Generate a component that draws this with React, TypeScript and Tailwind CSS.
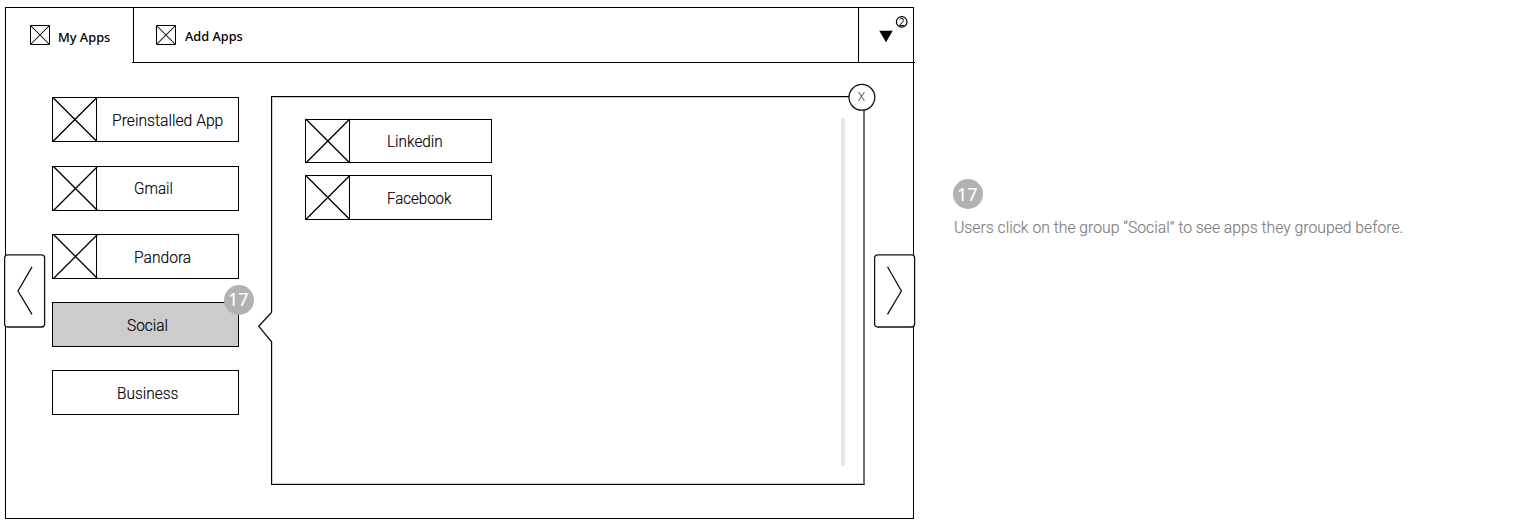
import React from "react";

const labelFont = "font-['Roboto','Liberation_Sans',sans-serif] font-light text-[16px] leading-5 whitespace-nowrap origin-left [-webkit-text-stroke:0.15px_currentColor]";
const tabFont = "font-['Noto_Sans','Open_Sans',sans-serif] font-medium text-[13px] leading-5 whitespace-nowrap origin-left";

function Cross({ className, dx = 0, dy = 0 }: { className: string; dx?: number; dy?: number }) {
  return (
    <svg className={className} viewBox="0 0 45 45" fill="none" stroke="black" strokeWidth="1.35">
      <path d={`M${0.5 + dx} ${0.5 + dy}L${44.5 + dx} ${44.5 + dy}M${44.5 + dx} ${0.5 + dy}L${0.5 + dx} ${44.5 + dy}`} />
    </svg>
  );
}

function SmallCross() {
  return (
    <svg className="block h-5 w-5 shrink-0" viewBox="0 0 20 20" fill="none" stroke="black">
      <path d="M.5 .5h19v19H.5z" />
      <path d="M1 1l18 18M19 1L1 19" strokeWidth="1.05" />
    </svg>
  );
}

function AppCard({ label, labelClass, box = "h-[45px]", dx = 0, dy = 0 }: { label: string; labelClass: string; box?: string; dx?: number; dy?: number }) {
  return (
    <div className={`flex w-[187px] shrink-0 border border-black bg-white ${box}`}>
      <div className="-mt-px -ml-px w-[45px] shrink-0 border-r border-black">
        <Cross className="block h-[45px] w-[45px] overflow-visible" dx={dx} dy={dy} />
      </div>
      <span className={`${labelFont} ${labelClass}`}>{label}</span>
    </div>
  );
}

function Badge({ className, textClass }: { className: string; textClass: string }) {
  return (
    <span className={`block h-[30px] w-[30px] rounded-full bg-[#b2b2b2] text-white font-['Noto_Sans',sans-serif] text-[18px] leading-[30px] ${className}`}>
      <span className={`block whitespace-nowrap [-webkit-text-stroke:0.15px_currentColor] ${textClass}`}>17</span>
    </span>
  );
}

function NavButton({ className, points }: { className: string; points: string }) {
  return (
    <button className={`absolute top-[254px] h-[74px] w-[42px] ${className}`}>
      <svg className="block h-[74px] w-[42px]" viewBox="0 0 42 74" fill="none" stroke="#111" strokeWidth="1.3">
        <rect x="0.6" y="0.8" width="40" height="72.2" rx="3" fill="white" />
        <polyline points={points} />
      </svg>
    </button>
  );
}

export default function App() {
  return (
    <div className="relative flex h-[524px] w-[1523px] overflow-hidden bg-white pt-[7px] pl-[5px] text-black">
      <main className="flex h-[512px] w-[909px] shrink-0 flex-col border border-black">
        <header className="flex h-[55px] shrink-0">
          <div className="flex w-[127px] shrink-0 pt-[17px] pl-6">
            <SmallCross />
            <span className={`${tabFont} mt-[2px] ml-2 scale-x-[0.985]`}>My Apps</span>
          </div>
          <div className="-ml-px w-px shrink-0 self-end border-b border-black" />
          <div className="flex w-[725px] shrink-0 border-b border-l border-black pt-[17px] pl-[22px]">
            <SmallCross />
            <span className={`${tabFont} mt-px ml-[9px] scale-x-[0.98]`}>Add Apps</span>
          </div>
          <div className="flex w-[57px] shrink-0 border-b border-l border-black">
            <svg className="block h-[54px] w-[54px]" viewBox="0 0 54 54">
              <path d="M20.3 22.8h13.4L27 34.2z" />
              <circle cx="42.7" cy="13.9" r="5.3" fill="none" stroke="black" strokeWidth="1.2" />
              <text x="42.7" y="17.6" textAnchor="middle" className="font-['Noto_Sans',sans-serif] text-[10px]">2</text>
            </svg>
          </div>
        </header>

        <div className="flex pl-[46px]">
          <nav className="flex w-[187px] shrink-0 flex-col pt-[34px]">
            <AppCard label="Preinstalled App" labelClass="mt-[13px] ml-[15px] scale-x-[0.98]" dx={0.4} />
            <div className="h-6" />
            <AppCard label="Gmail" labelClass="mt-3 ml-[37px] scale-x-[0.95]" dx={1} />
            <div className="h-[23px]" />
            <AppCard label="Pandora" labelClass="mt-[13px] ml-[37px] scale-x-[0.975]" dx={1} />
            <div className="relative mt-[23px] flex h-[45px] border border-black bg-[#ccc]">
              <span className={`${labelFont} mt-[13px] ml-[73.5px] scale-x-[0.965]`}>Social</span>
              <Badge className="absolute -top-[18px] left-[171px]" textClass="-mt-px pl-[4px]" />
            </div>
            <div className="mt-[23px] flex h-[45px] border border-black">
              <span className={`${labelFont} mt-[13px] ml-[63.5px] scale-x-[0.965]`}>Business</span>
            </div>
          </nav>

          <section className="relative mt-[33px] ml-8 flex h-[389px] w-[594px] shrink-0 justify-between border border-r-2 border-black border-r-[#6f6f6f] pt-[21px] pr-[18px] pl-[33px] shadow-[inset_1px_1px_0_#ccc,inset_0_-1px_0_#ccc]">
            <div className="flex flex-col pt-px">
              <AppCard label="Linkedin" labelClass="mt-3 ml-[36.5px] scale-x-[0.96]" box="h-[44px]" dy={-0.5} dx={0.3} />
              <div className="h-3" />
              <AppCard label="Facebook" labelClass="mt-[13px] ml-[36.5px] scale-x-[0.94]" dx={0.3} />
            </div>
            <div className="h-[348px] w-1 bg-[#e6e6e6]" />
            <svg className="absolute top-[214px] -left-[14px] h-[32px] w-[17px]" viewBox="0 0 17 32" fill="none">
              <path d="M12 1.5h4v29h-4z" fill="white" />
              <path d="M13.7 1.2L.7 15.2L13.7 31" stroke="#111" strokeWidth="1.3" />
            </svg>
            <svg className="absolute -top-[14px] left-[576px] h-7 w-7" viewBox="0 0 28 28">
              <circle cx="13.9" cy="14.3" r="12.9" fill="white" stroke="#111" strokeWidth="1.3" />
              <text x="13.5" y="18" textAnchor="middle" fill="#333" className="font-['Roboto',sans-serif] text-[12px] font-light">X</text>
            </svg>
          </section>
        </div>
      </main>

      <aside className="pt-[172px] pl-[39px] text-[#808080]">
        <Badge className="mt-px" textClass="-mt-px pl-[4px]" />
        <p className={`${labelFont} mt-[9px] ml-[0.5px] scale-x-[0.983]`}>Users click on the group “Social” to see apps they grouped before.</p>
      </aside>

      <NavButton className="left-[4px]" points="28,12.8 14,37 28,60.3" />
      <NavButton className="left-[874px]" points="13.5,12.8 27.4,37 13.5,60.3" />
    </div>
  );
}
